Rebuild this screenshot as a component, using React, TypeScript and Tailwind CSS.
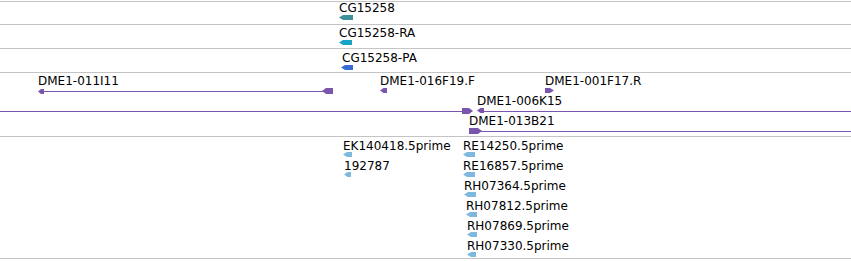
import React from 'react';

type Label = { text: string; pos: string };
type Glyph =
  | { kind: 'left' | 'right'; x: number; y: number; w: number; h: number }
  | { kind: 'line'; x1: number; x2: number; y: number };

type Track = {
  height: number;
  size: string;
  color: string;
  labels: Label[];
  glyphs: Glyph[];
};

const WIDTH = 851;

// glyph coordinates are relative to the top of each track's content box
const tracks: Track[] = [
  {
    height: 22,
    size: 'h-[23px]',
    color: '#3c9298',
    labels: [{ text: 'CG15258', pos: 'left-[339px] -top-px' }],
    glyphs: [{ kind: 'left', x: 339, y: 13, w: 14, h: 5 }],
  },
  {
    height: 23,
    size: 'h-[24px]',
    color: '#17a4c6',
    labels: [{ text: 'CG15258-RA', pos: 'left-[339px] top-px' }],
    glyphs: [{ kind: 'left', x: 339, y: 15, w: 13, h: 5 }],
  },
  {
    height: 23,
    size: 'h-[24px]',
    color: '#376cd3',
    labels: [{ text: 'CG15258-PA', pos: 'left-[342px] top-[2px]' }],
    glyphs: [{ kind: 'left', x: 341, y: 16, w: 12, h: 5 }],
  },
  {
    height: 63,
    size: 'h-[64px]',
    color: '#7a55ad',
    labels: [
      { text: 'DME1-011I11', pos: 'left-[38px] top-px' },
      { text: 'DME1-016F19.F', pos: 'left-[380px] top-px' },
      { text: 'DME1-001F17.R', pos: 'left-[545px] top-px' },
      { text: 'DME1-006K15', pos: 'left-[477px] top-[21px]' },
      { text: 'DME1-013B21', pos: 'left-[469px] top-[41px]' },
    ],
    glyphs: [
      { kind: 'line', x1: 43, x2: 323, y: 18 },
      { kind: 'left', x: 38, y: 16, w: 6, h: 5 },
      { kind: 'left', x: 322, y: 15, w: 11, h: 6 },
      { kind: 'left', x: 380, y: 15, w: 7, h: 5 },
      { kind: 'right', x: 545, y: 15, w: 9, h: 5 },
      { kind: 'line', x1: 0, x2: 463, y: 38 },
      { kind: 'right', x: 462, y: 35, w: 11, h: 6 },
      { kind: 'left', x: 477, y: 35, w: 7, h: 5 },
      { kind: 'line', x1: 483, x2: WIDTH, y: 38 },
      { kind: 'right', x: 469, y: 55, w: 13, h: 6 },
      { kind: 'line', x1: 481, x2: WIDTH, y: 58 },
    ],
  },
  {
    height: 121,
    size: 'h-[122px]',
    color: '#7fb8df',
    labels: [
      { text: 'EK140418.5prime', pos: 'left-[343px] top-[2px]' },
      { text: '192787', pos: 'left-[344px] top-[22px]' },
      { text: 'RE14250.5prime', pos: 'left-[463px] top-[2px]' },
      { text: 'RE16857.5prime', pos: 'left-[463px] top-[22px]' },
      { text: 'RH07364.5prime', pos: 'left-[464px] top-[42px]' },
      { text: 'RH07812.5prime', pos: 'left-[466px] top-[62px]' },
      { text: 'RH07869.5prime', pos: 'left-[467px] top-[82px]' },
      { text: 'RH07330.5prime', pos: 'left-[467px] top-[102px]' },
    ],
    glyphs: [
      { kind: 'left', x: 343, y: 15, w: 9, h: 5 },
      { kind: 'left', x: 344, y: 35, w: 7, h: 5 },
      { kind: 'left', x: 463, y: 15, w: 12, h: 5 },
      { kind: 'left', x: 463, y: 35, w: 12, h: 5 },
      { kind: 'left', x: 464, y: 55, w: 12, h: 5 },
      { kind: 'left', x: 466, y: 75, w: 11, h: 5 },
      { kind: 'left', x: 467, y: 95, w: 10, h: 5 },
      { kind: 'left', x: 467, y: 115, w: 9, h: 5 },
    ],
  },
];

function GlyphShape({ g, color }: { g: Glyph; color: string }) {
  if (g.kind === 'line') {
    return <rect x={g.x1} y={g.y} width={g.x2 - g.x1} height={1} fill={color} />;
  }
  const { x, y, w, h } = g;
  const tip = Math.min(4, w / 2);
  const points =
    g.kind === 'left'
      ? `${x},${y + h / 2} ${x + tip},${y} ${x + w},${y} ${x + w},${y + h} ${x + tip},${y + h}`
      : `${x},${y} ${x + w - tip},${y} ${x + w},${y + h / 2} ${x + w - tip},${y + h} ${x},${y + h}`;
  return <polygon points={points} fill={color} />;
}

function TrackRow({ track }: { track: Track }) {
  return (
    <div className={`relative border-b border-[#c4c4c4] ${track.size}`}>
      <svg
        className="absolute left-0 top-0"
        width={WIDTH}
        height={track.height}
        viewBox={`0 0 ${WIDTH} ${track.height}`}
      >
        {track.glyphs.map((g, i) => (
          <GlyphShape key={i} g={g} color={track.color} />
        ))}
      </svg>
      {track.labels.map(l => (
        <span
          key={l.text}
          className={`absolute whitespace-nowrap text-[12px] leading-[14px] text-black ${l.pos}`}
        >
          {l.text}
        </span>
      ))}
    </div>
  );
}

export default function App() {
  return (
    <div className="w-[851px] h-[261px] overflow-hidden bg-white pt-px font-['DejaVu_Sans',sans-serif]">
      <div className="flex flex-col border-t border-[#c4c4c4]">
        {tracks.map((t, i) => (
          <TrackRow key={i} track={t} />
        ))}
      </div>
    </div>
  );
}
